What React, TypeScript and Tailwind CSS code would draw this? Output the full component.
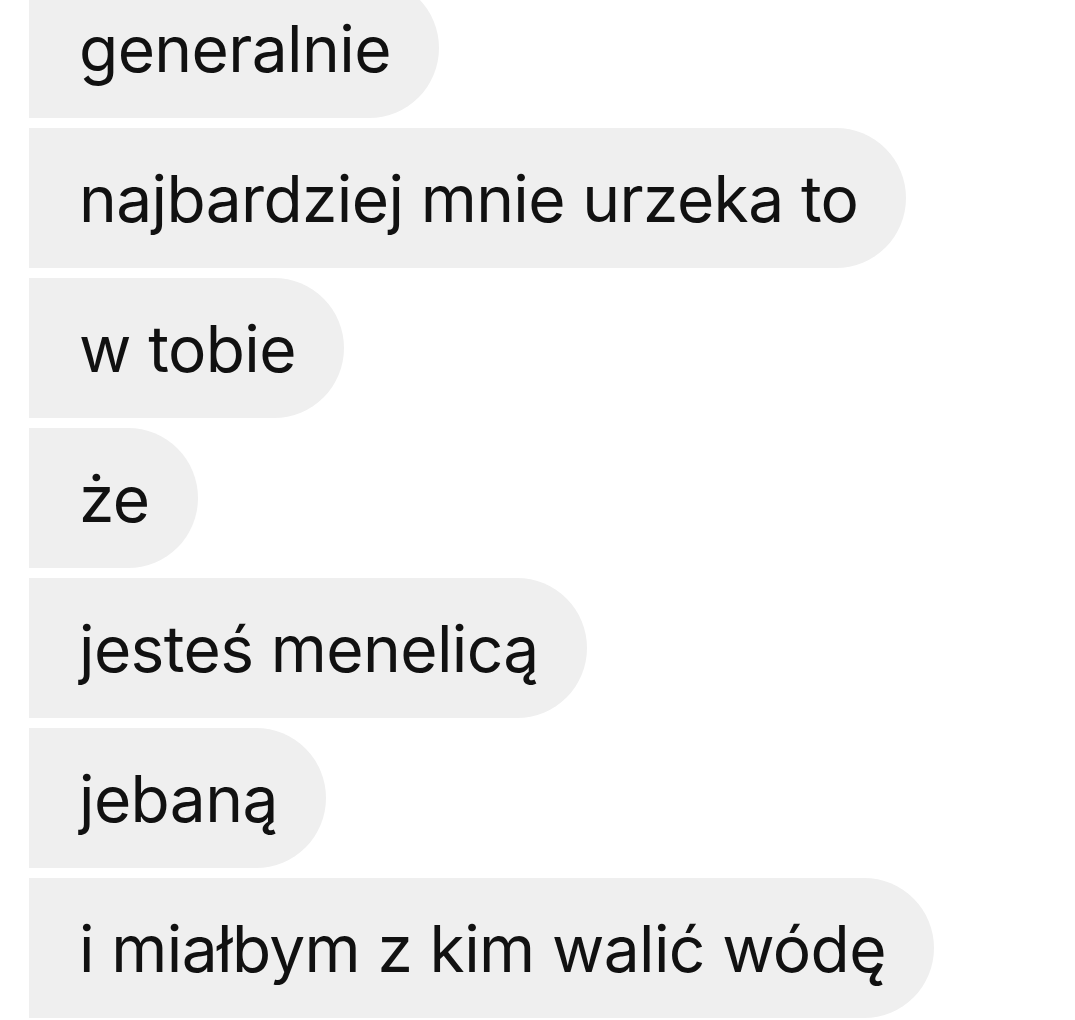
const messages = [
  "generalnie",
  "najbardziej mnie urzeka to",
  "w tobie",
  "że",
  "jesteś menelicą",
  "jebaną",
  "i miałbym z kim walić wódę",
];

function Bubble({ text }: { text: string }) {
  return (
    <div className="flex h-[140px] w-fit items-center rounded-l-[14px] rounded-r-full bg-[#efefef] pl-[50px] pr-[48px]">
      <span className="pt-[2px] text-[64px] leading-none tracking-[-0.6px] text-[#111]">{text}</span>
    </div>
  );
}

export default function App() {
  return (
    <div
      className="h-[1020px] w-[1075px] overflow-hidden bg-white"
      style={{ fontFamily: "Inter, 'Noto Sans', sans-serif" }}
    >
      <div className="-mt-[22px] flex flex-col gap-[10px] pl-[29px]">
        {messages.map((m) => (
          <Bubble key={m} text={m} />
        ))}
      </div>
    </div>
  );
}
